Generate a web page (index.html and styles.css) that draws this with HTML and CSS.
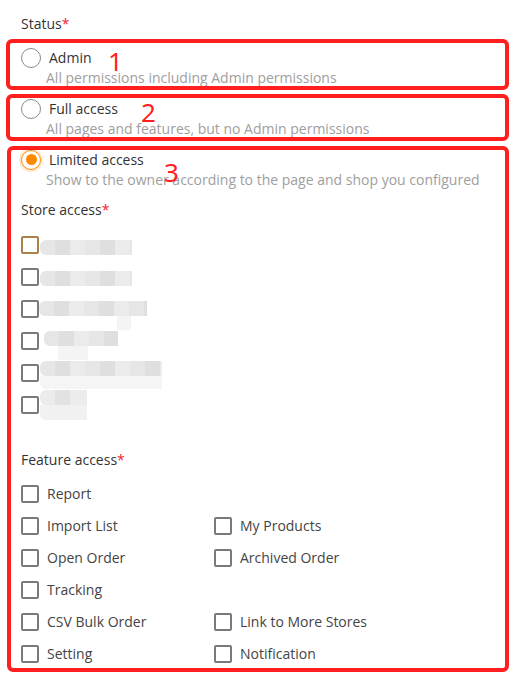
FILE: index.html
```html
<!DOCTYPE html>
<html>
<head>
<meta charset="utf-8">
<link rel="stylesheet" href="styles.css">
</head>
<body>
<div class="page">
  <div class="field-label">Status<span class="req">*</span></div>
  <div class="options">
    <div class="option">
      <div class="radio-row"><span class="radio"></span><span>Admin</span></div>
      <div class="desc">All permissions including Admin permissions</div>
    </div>
    <div class="option">
      <div class="radio-row"><span class="radio"></span><span>Full access</span></div>
      <div class="desc">All pages and features, but no Admin permissions</div>
    </div>
    <div class="option">
      <div class="radio-row"><span class="radio checked"></span><span>Limited access</span></div>
      <div class="desc">Show to the owner according to the page and shop you configured</div>
    </div>
  </div>

  <div class="field-label store-label">Store access<span class="req">*</span></div>
  <div class="store-list">
    <div class="store-row"><span class="check hover"></span><span class="blur b1"></span></div>
    <div class="store-row"><span class="check"></span><span class="blur b2"></span></div>
    <div class="store-row"><span class="check"></span><span class="blur b3"></span></div>
    <div class="store-row"><span class="check"></span><span class="blur b4"></span></div>
    <div class="store-row"><span class="check"></span><span class="blur b5"></span></div>
    <div class="store-row"><span class="check"></span><span class="blur b6"></span></div>
  </div>

  <div class="field-label feature-label">Feature access<span class="req">*</span></div>
  <div class="feature-grid">
    <div class="feat"><span class="check"></span><span>Report</span></div>
    <div></div>
    <div class="feat"><span class="check"></span><span>Import List</span></div>
    <div class="feat"><span class="check"></span><span>My Products</span></div>
    <div class="feat"><span class="check"></span><span>Open Order</span></div>
    <div class="feat"><span class="check"></span><span>Archived Order</span></div>
    <div class="feat"><span class="check"></span><span>Tracking</span></div>
    <div></div>
    <div class="feat"><span class="check"></span><span>CSV Bulk Order</span></div>
    <div class="feat"><span class="check"></span><span>Link to More Stores</span></div>
    <div class="feat"><span class="check"></span><span>Setting</span></div>
    <div class="feat"><span class="check"></span><span>Notification</span></div>
  </div>

  <div class="mark mark1"></div>
  <div class="mark mark2"></div>
  <div class="mark mark3"></div>
  <div class="num num1">1</div>
  <div class="num num2">2</div>
  <div class="num num3">3</div>
</div>
</body>
</html>
```

FILE: styles.css
```css
* { box-sizing: border-box; }
html, body { margin: 0; padding: 0; background: #fff; }
body {
  font-family: "Open Sans", "Noto Sans", sans-serif;
  font-size: 14px;
  color: #333;
}
.page {
  position: relative;
  width: 516px;
  height: 696px;
  padding: 14px 0 0 21px;
}
.field-label {
  line-height: 20px;
  height: 20px;
  color: #333;
}
.req { color: #f5222d; }

.options {
  margin-top: 13px;
  display: flex;
  flex-direction: column;
  gap: 10px;
}
.option { display: flex; flex-direction: column; }
.radio-row {
  display: flex;
  align-items: center;
  gap: 8px;
  height: 21px;
  line-height: 21px;
  color: #333;
}
.radio {
  width: 20px;
  height: 20px;
  border-radius: 50%;
  border: 1.5px solid #8a8a8a;
  background: #fff;
  flex: none;
  display: flex;
  align-items: center;
  justify-content: center;
}
.radio.checked {
  border-color: #ff8a00;
  box-shadow: 0 0 0 2px rgba(255, 138, 0, 0.18);
}
.radio.checked::after {
  content: "";
  width: 11px;
  height: 11px;
  border-radius: 50%;
  background: #ff8a00;
}
.desc {
  padding-left: 25px;
  line-height: 20px;
  height: 20px;
  color: #9e9e9e;
  white-space: nowrap;
}

.store-label { margin-top: 10px; }
.store-list {
  margin-top: 15px;
  display: flex;
  flex-direction: column;
  gap: 12px;
}
.store-row {
  display: flex;
  align-items: flex-start;
  height: 20px;
}
.check {
  width: 18px;
  height: 18px;
  margin-top: 1px;
  border: 2px solid #7a7a7a;
  border-radius: 2px;
  background: #fff;
  flex: none;
}
.check.hover { border-color: #a8824a; }

.blur {
  position: relative;
  display: block;
  height: 15px;
  margin-left: 1px;
  border-radius: 6px 0 0 6px;
  background: repeating-linear-gradient(90deg, #e6e6e6 0 15px, #dfdfdf 15px 30px, #ebebeb 30px 45px);
}
.blur::after {
  content: "";
  position: absolute;
  top: 15px;
  height: 14px;
  background: #f4f4f4;
}
.b1 { width: 92px; margin-top: 5px; }
.b1::after { display: none; }
.b2 { width: 92px; margin-top: 4px; }
.b2::after { display: none; }
.b3 { width: 108px; margin-top: 2px; margin-left: 0; }
.b3::after { left: 78px; width: 14px; }
.b4 { width: 74px; margin-top: 0; margin-left: 5px; }
.b4::after { left: 14px; width: 30px; }
.b5 { width: 122px; margin-top: -2px; }
.b5::after { left: 0; width: 122px; height: 13px; background: #f5f5f5; border-radius: 0 0 0 6px; }
.b6 { width: 47px; margin-top: -5px; background: repeating-linear-gradient(90deg, #ececec 0 15px, #e2e2e2 15px 30px, #ececec 30px 45px); }
.b6::after { left: 0; width: 47px; height: 15px; background: #f1f1f1; border-radius: 0 0 0 6px; }

.feature-label { margin-top: 35px; }
.feature-grid {
  margin-top: 14px;
  display: grid;
  grid-template-columns: 193px 1fr;
  grid-auto-rows: 20px;
  row-gap: 12px;
}
.feat {
  display: flex;
  align-items: center;
  gap: 8px;
  line-height: 20px;
  color: #444;
  white-space: nowrap;
}
.feat .check { margin-top: 0; }

.mark {
  position: absolute;
  border: 4px solid #ff1f1f;
  border-radius: 6px;
  pointer-events: none;
}
.mark1 { left: 6px; top: 39px; width: 503px; height: 51px; }
.mark2 { left: 6px; top: 94px; width: 503px; height: 47px; }
.mark3 { left: 7px; top: 146px; width: 502px; height: 526px; }

.num {
  position: absolute;
  font-family: "Noto Sans", "DejaVu Sans", sans-serif;
  font-weight: 400;
  font-size: 26px;
  line-height: 1;
  color: #ff1f1f;
}
.num1 { left: 108px; top: 48px; }
.num2 { left: 141px; top: 99px; }
.num3 { left: 164px; top: 159px; }
```
